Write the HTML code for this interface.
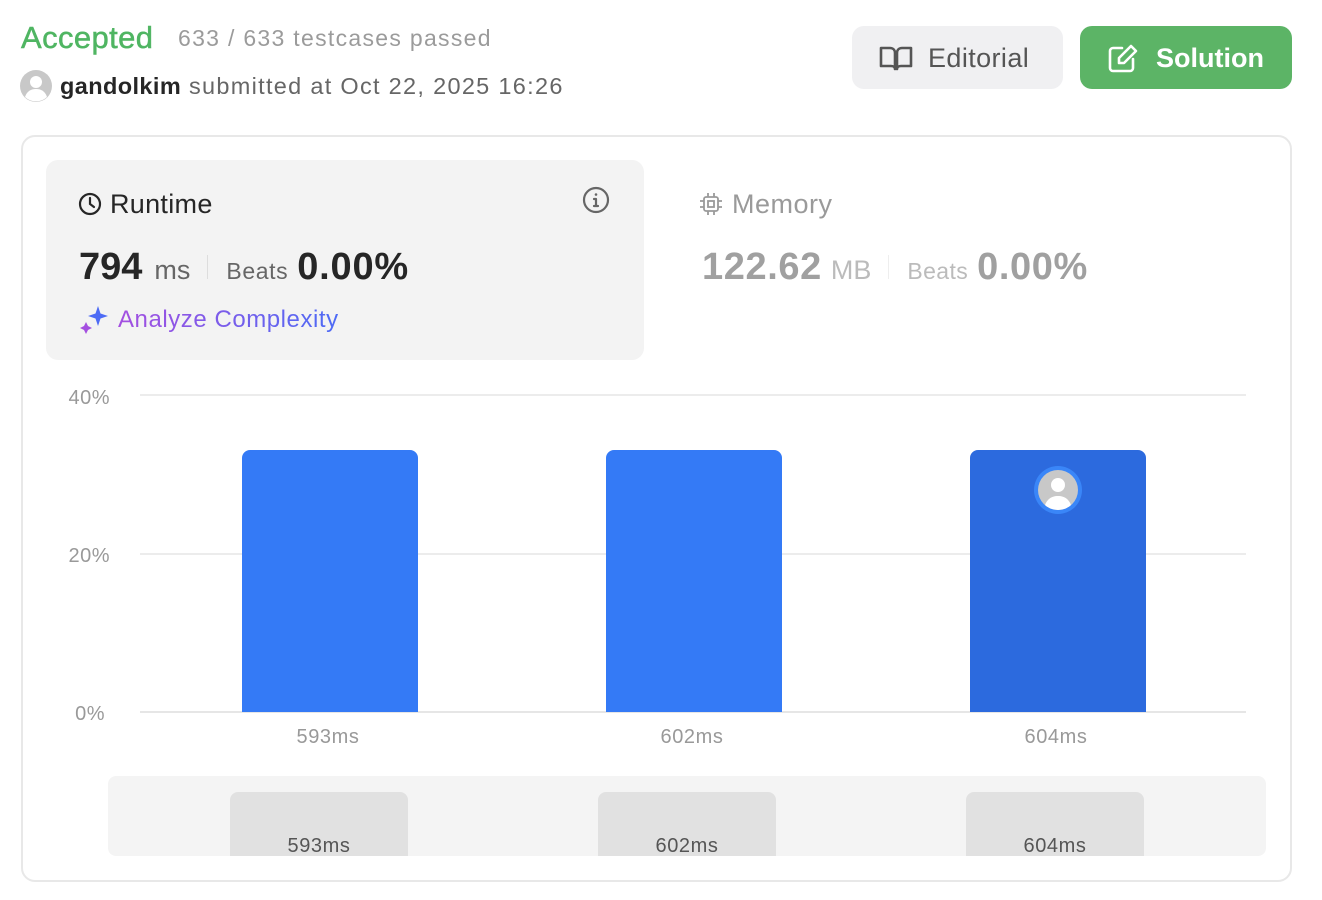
<!DOCTYPE html>
<html><head><meta charset="utf-8"><style>
*{box-sizing:border-box;margin:0;padding:0}
body{width:1322px;height:900px;background:#fff;font-family:"Liberation Sans",sans-serif;position:relative;overflow:hidden}
.a{position:absolute;white-space:nowrap}
.row{display:flex;align-items:baseline}
</style></head><body>
<div class="a" style="left:21px;top:20px;font-size:31px;color:#4fb562;letter-spacing:0.4px;font-weight:500;-webkit-text-stroke:0.5px #4fb562">Accepted</div>
<div class="a" style="left:178px;top:25px;font-size:23px;color:#9b9b9b;letter-spacing:1.3px">633 / 633 testcases passed</div>
<svg class="a" style="left:20px;top:70px" width="32" height="32" viewBox="0 0 32 32"><circle cx="16" cy="16" r="16" fill="#c8c8c8"/><circle cx="16" cy="12" r="6" fill="#fff"/><path d="M5 27c2-6 6-8 11-8s9 2 11 8a16 16 0 0 1-22 0z" fill="#fff"/></svg>
<div class="a" style="left:60px;top:73px;font-size:23.5px;color:#666;letter-spacing:1.3px"><b style="color:#262626;font-weight:600;letter-spacing:0.4px">gandolkim</b> submitted at Oct 22, 2025 16:26</div>

<div class="a" style="left:852px;top:26px;width:211px;height:63px;background:#f0f0f2;border-radius:12px"></div>
<svg class="a" style="left:879px;top:45px" width="34" height="26" viewBox="0 0 34 26" fill="none" stroke="#555" stroke-width="2.6" stroke-linejoin="round"><path d="M2 3h9c3 0 5 2 5 5v16c0-2-2-3-4-3H2z"/><path d="M32 3h-9c-3 0-5 2-5 5v16c0-2 2-3 4-3h10z"/></svg>
<div class="a" style="left:928px;top:43px;font-size:27px;color:#555;letter-spacing:0.4px">Editorial</div>
<div class="a" style="left:1080px;top:26px;width:212px;height:63px;background:#5cb466;border-radius:12px"></div>
<svg class="a" style="left:1108px;top:43px" width="32" height="30" viewBox="0 0 32 30" fill="none" stroke="#fff" stroke-width="2.6" stroke-linecap="round" stroke-linejoin="round"><path d="M14 5H5a3 3 0 0 0-3 3v17a3 3 0 0 0 3 3h17a3 3 0 0 0 3-3v-9"/><path d="M23 3l5 5-12 12h-5v-5z"/></svg>
<div class="a" style="left:1156px;top:43px;font-size:27px;color:#fff;font-weight:600">Solution</div>

<div class="a" style="left:21px;top:135px;width:1271px;height:747px;border:2px solid #e8e8e8;border-radius:14px"></div>
<div class="a" style="left:46px;top:160px;width:598px;height:200px;background:#f3f3f3;border-radius:12px"></div>
<svg class="a" style="left:78px;top:192px" width="24" height="24" viewBox="0 0 24 24" fill="none" stroke="#262626" stroke-width="2.2"><circle cx="12" cy="12" r="10"/><path d="M12 6v6l4 3" stroke-linecap="round"/></svg>
<div class="a" style="left:110px;top:189px;font-size:27px;color:#262626;letter-spacing:0.3px">Runtime</div>
<svg class="a" style="left:582px;top:186px" width="28" height="28" viewBox="0 0 28 28" fill="none" stroke="#666" stroke-width="2.2"><circle cx="14" cy="14" r="12"/><path d="M14 13v7M12 20h4M12 13h2" stroke-linecap="round"/><circle cx="14" cy="8.5" r="1.3" fill="#666" stroke="none"/></svg>
<div class="a row" style="left:79px;top:246px;height:44px">
<span style="font-size:38px;font-weight:700;color:#262626">794</span>
<span style="font-size:27px;color:#666;margin-left:12px">ms</span>
<span style="display:inline-block;width:1px;height:24px;background:#ddd;margin:0 18px 0 17px"></span>
<span style="font-size:23px;color:#666;letter-spacing:0.6px">Beats</span>
<span style="font-size:38px;font-weight:700;color:#262626;margin-left:9px;letter-spacing:0.8px">0.00%</span>
</div>
<svg class="a" style="left:80px;top:306px" width="30" height="28" viewBox="0 0 30 28"><path d="M18 0l2.5 7.5L28 10l-7.5 2.5L18 20l-2.5-7.5L8 10l7.5-2.5z" fill="#4d6bf5"/><path d="M6 16l2 4 4 2-4 2-2 4-2-4-4-2 4-2z" fill="#a44fe0"/></svg>
<div class="a" style="left:118px;top:306px;font-size:24px;letter-spacing:0.55px;background:linear-gradient(90deg,#a44fe0,#4d6bf5);-webkit-background-clip:text;background-clip:text;color:transparent">Analyze Complexity</div>

<svg class="a" style="left:699px;top:192px" width="24" height="24" viewBox="0 0 24 24" fill="none" stroke="#9a9a9a" stroke-width="1.8"><rect x="5" y="5" width="14" height="14" rx="2"/><rect x="9" y="9" width="6" height="6"/><path d="M9 1v4M15 1v4M9 19v4M15 19v4M1 9h4M1 15h4M19 9h4M19 15h4"/></svg>
<div class="a" style="left:732px;top:189px;font-size:27px;color:#9a9a9a;letter-spacing:0.5px">Memory</div>
<div class="a row" style="left:702px;top:246px;height:44px">
<span style="font-size:38px;font-weight:700;color:#a0a0a0;letter-spacing:0.6px">122.62</span>
<span style="font-size:27px;color:#bbb;margin-left:9px">MB</span>
<span style="display:inline-block;width:1px;height:24px;background:#eee;margin:0 18px 0 17px"></span>
<span style="font-size:23px;color:#bbb;letter-spacing:0.4px">Beats</span>
<span style="font-size:38px;font-weight:700;color:#a0a0a0;margin-left:9px;letter-spacing:0.6px">0.00%</span>
</div>

<div class="a" style="left:140px;top:394px;width:1106px;height:2px;background:#ececec"></div>
<div class="a" style="left:140px;top:553px;width:1106px;height:2px;background:#ececec"></div>
<div class="a" style="left:140px;top:711px;width:1106px;height:2px;background:#e6e6e6"></div>
<div class="a" style="left:40px;top:387px;width:70px;text-align:right;font-size:20px;color:#999;letter-spacing:0.5px">40%</div>
<div class="a" style="left:40px;top:545px;width:70px;text-align:right;font-size:20px;color:#999;letter-spacing:0.5px">20%</div>
<div class="a" style="left:40px;top:703px;width:65px;text-align:right;font-size:20px;color:#999;letter-spacing:0.5px">0%</div>
<div class="a" style="left:242px;top:450px;width:176px;height:262px;background:#347af6;border-radius:8px 8px 0 0"></div>
<div class="a" style="left:606px;top:450px;width:176px;height:262px;background:#347af6;border-radius:8px 8px 0 0"></div>
<div class="a" style="left:970px;top:450px;width:176px;height:262px;background:#2c6ade;border-radius:8px 8px 0 0"></div>
<svg class="a" style="left:1034px;top:466px" width="48" height="48" viewBox="0 0 48 48"><circle cx="24" cy="24" r="24" fill="#3a86f8"/><circle cx="24" cy="24" r="20" fill="#c8c8c8"/><clipPath id="c"><circle cx="24" cy="24" r="20"/></clipPath><g clip-path="url(#c)" fill="#fff"><circle cx="24" cy="19" r="7"/><path d="M10 44c1-10 7-14 14-14s13 4 14 14z"/></g></svg>
<div class="a" style="left:240px;top:726px;width:176px;text-align:center;font-size:20px;color:#999;letter-spacing:0.6px">593ms</div>
<div class="a" style="left:604px;top:726px;width:176px;text-align:center;font-size:20px;color:#999;letter-spacing:0.6px">602ms</div>
<div class="a" style="left:968px;top:726px;width:176px;text-align:center;font-size:20px;color:#999;letter-spacing:0.6px">604ms</div>

<div class="a" style="left:108px;top:776px;width:1158px;height:80px;background:#f4f4f4;border-radius:8px;overflow:hidden">
<div class="a" style="left:122px;top:16px;width:178px;height:70px;background:#e1e1e1;border-radius:8px 8px 0 0"></div>
<div class="a" style="left:490px;top:16px;width:178px;height:70px;background:#e1e1e1;border-radius:8px 8px 0 0"></div>
<div class="a" style="left:858px;top:16px;width:178px;height:70px;background:#e1e1e1;border-radius:8px 8px 0 0"></div>
<div class="a" style="left:122px;top:59px;width:178px;text-align:center;font-size:20px;color:#555;letter-spacing:0.6px">593ms</div>
<div class="a" style="left:490px;top:59px;width:178px;text-align:center;font-size:20px;color:#555;letter-spacing:0.6px">602ms</div>
<div class="a" style="left:858px;top:59px;width:178px;text-align:center;font-size:20px;color:#555;letter-spacing:0.6px">604ms</div>
</div>
</body></html>
